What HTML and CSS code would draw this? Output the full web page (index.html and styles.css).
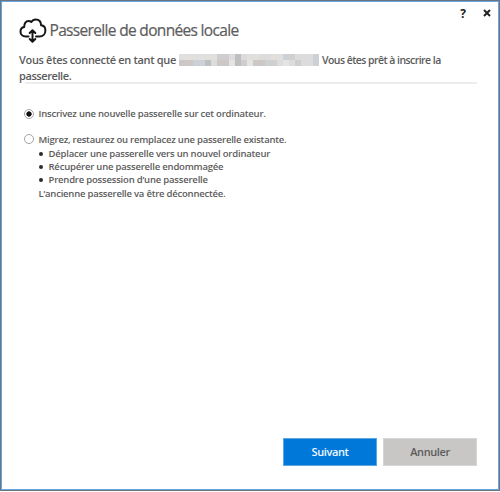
FILE: index.html
```
<!DOCTYPE html>
<html lang="fr">
<head>
<meta charset="utf-8">
<title>Passerelle de données locale</title>
<link rel="stylesheet" href="styles.css">
</head>
<body>
<main class="window">
  <div class="titlebar">
    <span class="help">?</span>
    <svg class="close" viewBox="0 0 8 8"><path d="M1 1l6 6M7 1L1 7"/></svg>
  </div>
  <header class="brand">
    <svg class="cloud" viewBox="0 0 28 26">
      <path d="M9.500 18.500H6.800C3.600 18.500 1.500 16.400 1.500 13.700c0-2.500 1.700-4.300 3.700-4.600C5.100 5.200 7 3 9.500 3c1.100 0 2 .3 2.800 1C13.400 2.200 15 1.500 16.800 1.500c3.200 0 5.200 2.300 5.300 5.700 2.800.3 4.300 2.500 4.300 5.200 0 3.400-2.500 6.100-6 6.100H17"/>
      <path d="M13.500 13v10M10.700 15l2.800-2.700 2.800 2.700M10.700 21l2.800 2.700 2.800-2.700"/>
    </svg>
    <h1 class="title">Passerelle de données locale</h1>
  </header>
  <section class="status">
    <div class="row"><span class="signed">Vous êtes connecté en tant que</span>
      <svg class="account" viewBox="0 0 140 12" shape-rendering="crispEdges">
        <path fill="#dcdcdc" d="M0 0h140v12H0z"/>
        <path fill="#e2e0de" d="M0 0h38v6H0zM68 0h12v6H68zM92 0h12v6H92z"/>
        <path fill="#cdc7c5" d="M0 6h14v6H0zM38 6h12v6H38zM74 6h12v6H74z"/>
        <path fill="#cbd1d6" d="M14 6h12v6H14zM104 0h6v6h-6zM134 0h6v12h-6z"/>
        <path fill="#bfbfbf" d="M26 6h6v6h-6zM56 0h6v12h-6z"/>
        <path fill="#d0cdd0" d="M38 0h12v6H38zM62 6h6v6h-6zM116 6h6v6h-6z"/>
        <path fill="#cfd1d0" d="M86 6h12v6H86zM110 0h6v6h-6z"/>
        <path fill="#e4e4e3" d="M50 6h6v6h-6zM68 6h6v6h-6zM104 6h6v6h-6z"/>
      </svg>
      <span class="ready">Vous êtes prêt à inscrire la</span></div>
    <div class="row"><span class="gateway">passerelle.</span></div>
  </section>
  <section class="options">
    <div class="option"><span class="radio checked"></span><span class="label">Inscrivez une nouvelle passerelle sur cet ordinateur.</span></div>
    <div class="option second"><span class="radio"></span><span class="label">Migrez, restaurez ou remplacez une passerelle existante.</span></div>
    <ul class="details">
      <li>Déplacer une passerelle vers un nouvel ordinateur</li>
      <li>Récupérer une passerelle endommagée</li>
      <li>Prendre possession d’une passerelle</li>
    </ul>
    <p class="note">L’ancienne passerelle va être déconnectée.</p>
  </section>
  <footer class="actions">
    <button class="button primary">Suivant</button>
    <button class="button">Annuler</button>
  </footer>
</main>
</body>
</html>
```
FILE: styles.css
```
* { box-sizing: border-box; }
body { margin: 0; background: #fff; font-family: "Open Sans", "Noto Sans", sans-serif; color: #5c5c5c; }
h1, p, ul { margin: 0; padding: 0; }
.window { height: 491px; border: 1px solid #6b7480; box-shadow: inset 0 0 0 1px #64a8df; display: flex; flex-direction: column; white-space: nowrap; }
.titlebar { height: 17px; padding: 4px 8px 0 0; display: flex; justify-content: flex-end; }
.help { font-size: 12px; line-height: 17px; font-weight: 700; color: #222; margin-right: 17px; }
.close { width: 8px; height: 8px; margin-top: 4px; fill: none; stroke: #222; stroke-width: 2; }
.brand { display: flex; height: 30px; padding-left: 18px; }
.cloud { width: 28px; height: 26px; fill: none; stroke: #151515; stroke-width: 2; stroke-linecap: round; stroke-linejoin: round; }
.title { font-size: 15.5px; line-height: 25px; font-weight: 400; margin-left: 2.5px; letter-spacing: -.67px; -webkit-text-stroke: .2px #5c5c5c; }
.status { margin: 4px 22px 0 18px; height: 32px; font-size: 11px; font-weight: 600; letter-spacing: -.33px; background: linear-gradient(#ededed, #ededed) 6px 30px / 100% 2px no-repeat; }
.row { height: 16px; line-height: 16px; display: flex; }
.signed { width: 160px; }
.gateway { letter-spacing: -.42px; }
.account { width: 140px; height: 12px; margin-top: 2px; }
.ready { margin-left: 3px; font-size: 10.5px; letter-spacing: -.55px; }
.options { padding: 23px 0 0 23px; font-size: 9.5px; font-weight: 600; letter-spacing: -.22px; flex: 1; }
.option { display: flex; height: 14px; line-height: 14px; }
.second { margin-top: 12px; }
.radio { width: 10px; height: 10px; border: 1px solid #a5a5a5; border-radius: 50%; margin: 1px 4.5px 0 0; }
.checked { background: radial-gradient(circle, #111 2.3px, #fff 3px); margin-top: 2px; }
.details { list-style: none; padding-left: 14.5px; }
.details li { height: 13px; line-height: 13px; display: flex; align-items: center; letter-spacing: -.2px; }
.details li::before { content: ""; width: 4px; height: 4px; border-radius: 50%; background: #2b2b2b; margin-right: 6px; }
.note { padding-left: 14.5px; line-height: 15px; }
.actions { display: flex; gap: 6px; justify-content: flex-end; padding: 0 22px 24px 0; }
.button { width: 94px; height: 28px; border: 1px solid #d5d5d4; padding: 0; background: #c8c7c6; color: #5c5c5c; font: 600 11px/26px "Open Sans", sans-serif; letter-spacing: -.4px; }
.primary { background: #0078d9; border-color: #5aa7e4; color: #eef7ff; }
```
